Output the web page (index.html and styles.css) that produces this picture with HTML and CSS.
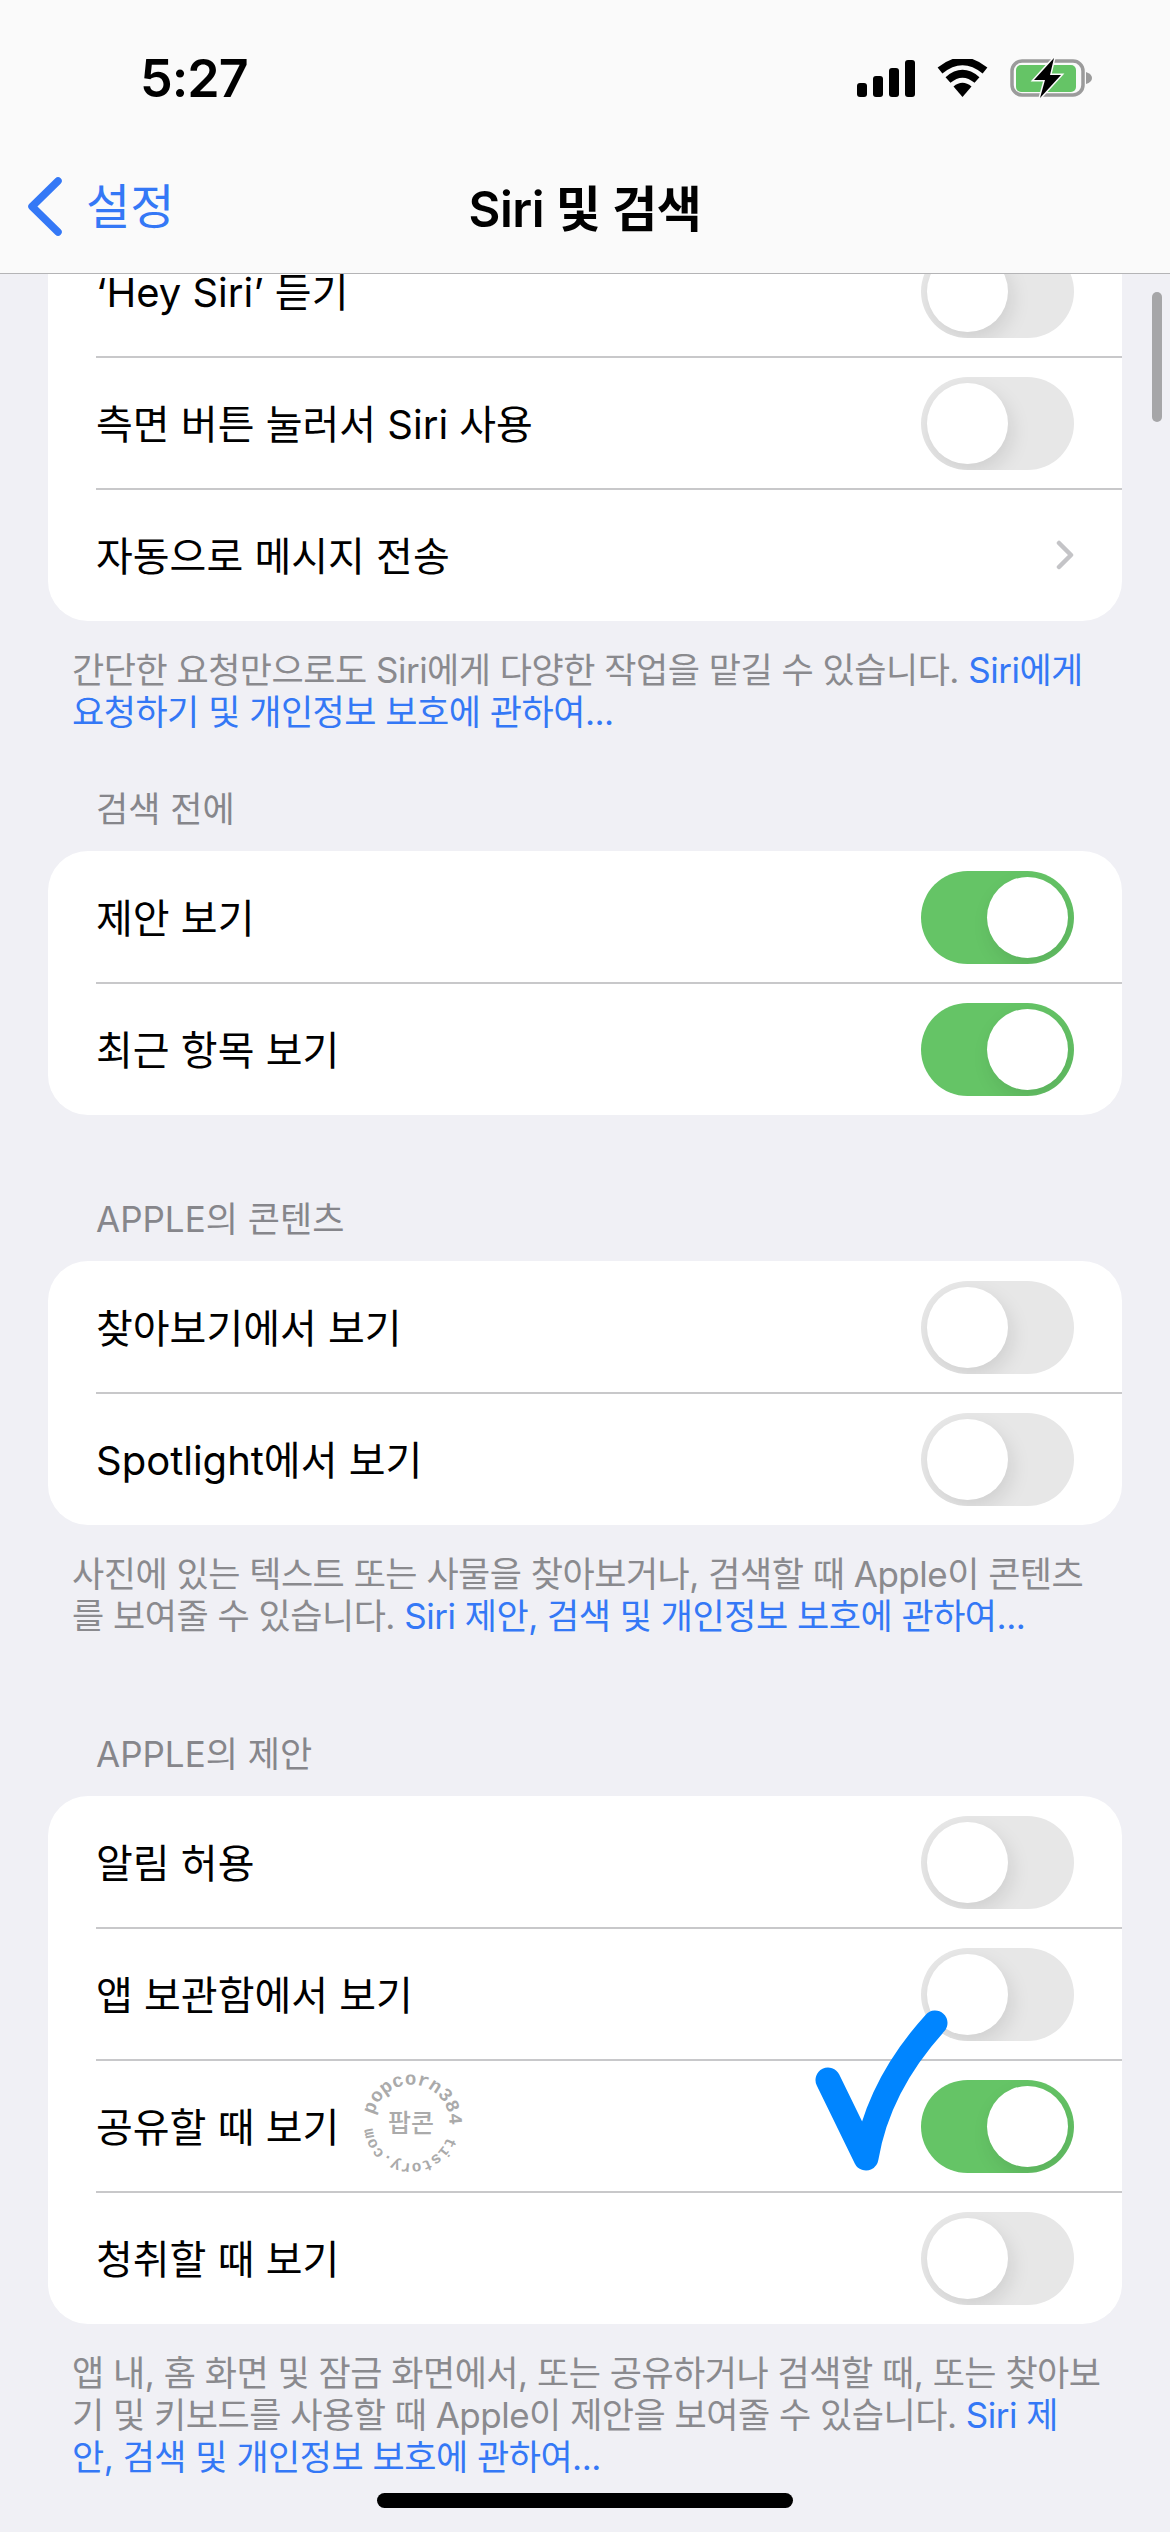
FILE: index.html
```html
<!DOCTYPE html>
<html lang="ko">
<head>
    <meta charset="utf-8">
    <title>Siri 및 검색</title>
    <link rel="stylesheet" href="styles.css">
</head>
<body>
<div class="phone">
    <header class="top">
        <div class="status">
            <span class="time">5:27</span>
            <div class="status-icons">
                <svg width="58" height="37" viewBox="0 0 58 37">
                    <rect x="0" y="23" width="10" height="14" rx="3"/>
                    <rect x="16" y="16" width="10" height="21" rx="3"/>
                    <rect x="32" y="8" width="10" height="29" rx="3"/>
                    <rect x="48" y="0" width="10" height="37" rx="3"/>
                </svg>
                <svg width="51" height="38" viewBox="0 0 51 38">
                    <path d="M25.5 38 L16.5 27.5 Q25.5 20 34.5 27.5 Z"/>
                    <path d="M11 21 Q25.5 8.500 40 21" fill="none" stroke="#000" stroke-width="7.500"/>
                    <path d="M3 11.500 Q25.500 -7 48 11.500" fill="none" stroke="#000" stroke-width="7.500"/>
                </svg>
                <svg width="82" height="40" viewBox="0 0 82 40">
                    <rect x="2" y="3" width="71" height="34" rx="10" fill="none" stroke="#9b9b9b" stroke-width="3.500"/>
                    <path d="M76 14 Q82 16 82 20 Q82 24 76 26 Z" fill="#9b9b9b"/>
                    <rect x="6" y="7" width="60" height="27" rx="5" fill="#65c466"/>
                    <path d="M44 0 L24 22 L35 22 L30 40 L51 17 L40 17 Z" fill="#000" stroke="#fbfbfb" stroke-width="3" paint-order="stroke"/>
                </svg>
            </div>
        </div>
        <nav class="navbar">
            <a class="back">
                <svg width="37" height="61" viewBox="0 0 37 61">
                    <path d="M32 5 L6 30.500 L32 56" fill="none" stroke="#3478f6" stroke-width="7.500" stroke-linecap="round" stroke-linejoin="round"/>
                </svg>
                <span>설정</span>
            </a>
            <h1>Siri 및 검색</h1>
        </nav>
    </header>

    <main class="content">
        <section class="card first">
            <div class="row"><span>‘Hey Siri’ 듣기</span><div class="toggle"></div></div>
            <div class="row"><span>측면 버튼 눌러서 Siri 사용</span><div class="toggle"></div></div>
            <div class="row">
                <span>자동으로 메시지 전송</span>
                <svg class="chevron" width="18" height="30" viewBox="0 0 18 30">
                    <path d="M3 3 L15 15 L3 27" fill="none" stroke="#c4c4c7" stroke-width="4.500" stroke-linecap="round" stroke-linejoin="round"/>
                </svg>
            </div>
        </section>
        <p class="note">간단한 요청만으로도 Siri에게 다양한 작업을 맡길 수 있습니다. <a>Siri에게<br>요청하기 및 개인정보 보호에 관하여...</a></p>

        <h2 class="label">검색 전에</h2>
        <section class="card">
            <div class="row"><span>제안 보기</span><div class="toggle on"></div></div>
            <div class="row"><span>최근 항목 보기</span><div class="toggle on"></div></div>
        </section>

        <h2 class="label spaced">APPLE의 콘텐츠</h2>
        <section class="card">
            <div class="row"><span>찾아보기에서 보기</span><div class="toggle"></div></div>
            <div class="row"><span>Spotlight에서 보기</span><div class="toggle"></div></div>
        </section>
        <p class="note">사진에 있는 텍스트 또는 사물을 찾아보거나, 검색할 때 Apple이 콘텐츠<br>를 보여줄 수 있습니다. <a>Siri 제안, 검색 및 개인정보 보호에 관하여...</a></p>

        <h2 class="label wide">APPLE의 제안</h2>
        <section class="card">
            <div class="row"><span>알림 허용</span><div class="toggle"></div></div>
            <div class="row"><span>앱 보관함에서 보기</span><div class="toggle"></div></div>
            <div class="row"><span>공유할 때 보기</span><div class="toggle on"></div></div>
            <div class="row"><span>청취할 때 보기</span><div class="toggle"></div></div>
        </section>
        <p class="note">앱 내, 홈 화면 및 잠금 화면에서, 또는 공유하거나 검색할 때, 또는 찾아보<br>기 및 키보드를 사용할 때 Apple이 제안을 보여줄 수 있습니다. <a>Siri 제<br>안, 검색 및 개인정보 보호에 관하여...</a></p>
    </main>

    <!-- things lying over the page -->
    <div class="scrollbar"></div>
    <div class="home-bar"></div>

    <svg class="stamp" width="120" height="120" viewBox="0 0 120 120">
        <defs>
            <path id="ring" d="M23 51 A38.100 38.100 0 1 1 97 69 A38.100 38.100 0 1 1 23 51"/>
        </defs>
        <text class="stamp-ring"><textPath href="#ring">popcorn384 <tspan class="stamp-small">tistory.com</tspan></textPath></text>
        <text class="stamp-name" x="60" y="68" text-anchor="middle">팝콘</text>
    </svg>

    <svg class="tick" width="130" height="160" viewBox="0 0 130 160">
        <path d="M22 60 L60 138 C68 90 92 44 129 3" fill="none" stroke="#0085ff" stroke-width="25" stroke-linecap="round" stroke-linejoin="round"/>
    </svg>
</div>
</body>
</html>
```

FILE: styles.css
```css
* { box-sizing: border-box; }
html, body { margin: 0; padding: 0; }
body { font-family: Inter, "Noto Sans CJK KR", sans-serif; background: #f0f0f5; color: #000; }
.phone { position: relative; width: 1170px; height: 2532px; overflow: hidden; }

.top { position: relative; z-index: 2; height: 274px; background: #fafafa; border-bottom: 1px solid #b4b4b6; }
.status { display: flex; justify-content: space-between; align-items: center; height: 116px; padding: 40px 78px 0 140px; }
.time { font-size: 52px; font-weight: 600; letter-spacing: -1px; }
.status-icons { display: flex; align-items: center; gap: 22px; }
.status-icons svg { display: block; }
.navbar { position: relative; display: flex; align-items: center; justify-content: center; height: 157px; padding-top: 22px; }
.navbar h1 { margin: 0; font-size: 49px; font-weight: 600; letter-spacing: -0.5px; }
.back { position: absolute; left: 26px; top: 60px; display: flex; align-items: center; gap: 23px; color: #3478f6; font-size: 48px; line-height: 61px; }

.content { height: 2258px; overflow: hidden; }
.card { margin: 0 48px; background: #fff; border-radius: 40px; overflow: hidden; }
.card.first { margin-top: -49px; }
.row { position: relative; display: flex; align-items: center; justify-content: space-between; height: 132px; margin-left: 48px; padding-right: 48px; font-size: 40px; }
.row > span { padding-bottom: 3px; }
.row + .row::before { content: ""; position: absolute; left: 0; right: 0; top: -1px; height: 2px; background: #c8c8ca; }

.toggle { position: relative; width: 153px; height: 93px; border-radius: 47px; background: #e7e7e7; overflow: hidden; }
.toggle::after { content: ""; position: absolute; left: 6px; top: 6px; width: 81px; height: 81px; border-radius: 50%; background: #fff; box-shadow: 4px 8px 20px rgba(0,0,0,0.10); }
.toggle.on { background: #65c466; }
.toggle.on::after { left: 66px; }

.note { margin: 0; padding: 28px 48px 0 72px; font-size: 35px; letter-spacing: -0.5px; line-height: 42px; color: #8a8a8e; white-space: nowrap; }
.note a { color: #3478f6; }
.label { margin: 55px 0 21px; padding-left: 96px; font-size: 35px; line-height: 42px; font-weight: 400; color: #86868b; }
.label.spaced { margin-top: 83px; }
.label.wide { margin-top: 96px; }

.scrollbar { position: absolute; z-index: 1; left: 1152px; top: 292px; width: 10px; height: 130px; border-radius: 5px; background: #a6a6a8; }
.home-bar { position: absolute; left: 377px; top: 2493px; width: 416px; height: 15px; border-radius: 8px; background: #000; }

.stamp { position: absolute; left: 351px; top: 2064px; }
.stamp-ring { font-family: "Liberation Mono", monospace; font-size: 19px; font-weight: 700; fill: #aaaaaa; }
.stamp-small { font-size: 16px; }
.stamp-name { font-family: "Noto Sans CJK KR", sans-serif; font-size: 25px; font-weight: 500; fill: #aaaaaa; }
.tick { position: absolute; left: 806px; top: 2020px; overflow: visible; }
```
